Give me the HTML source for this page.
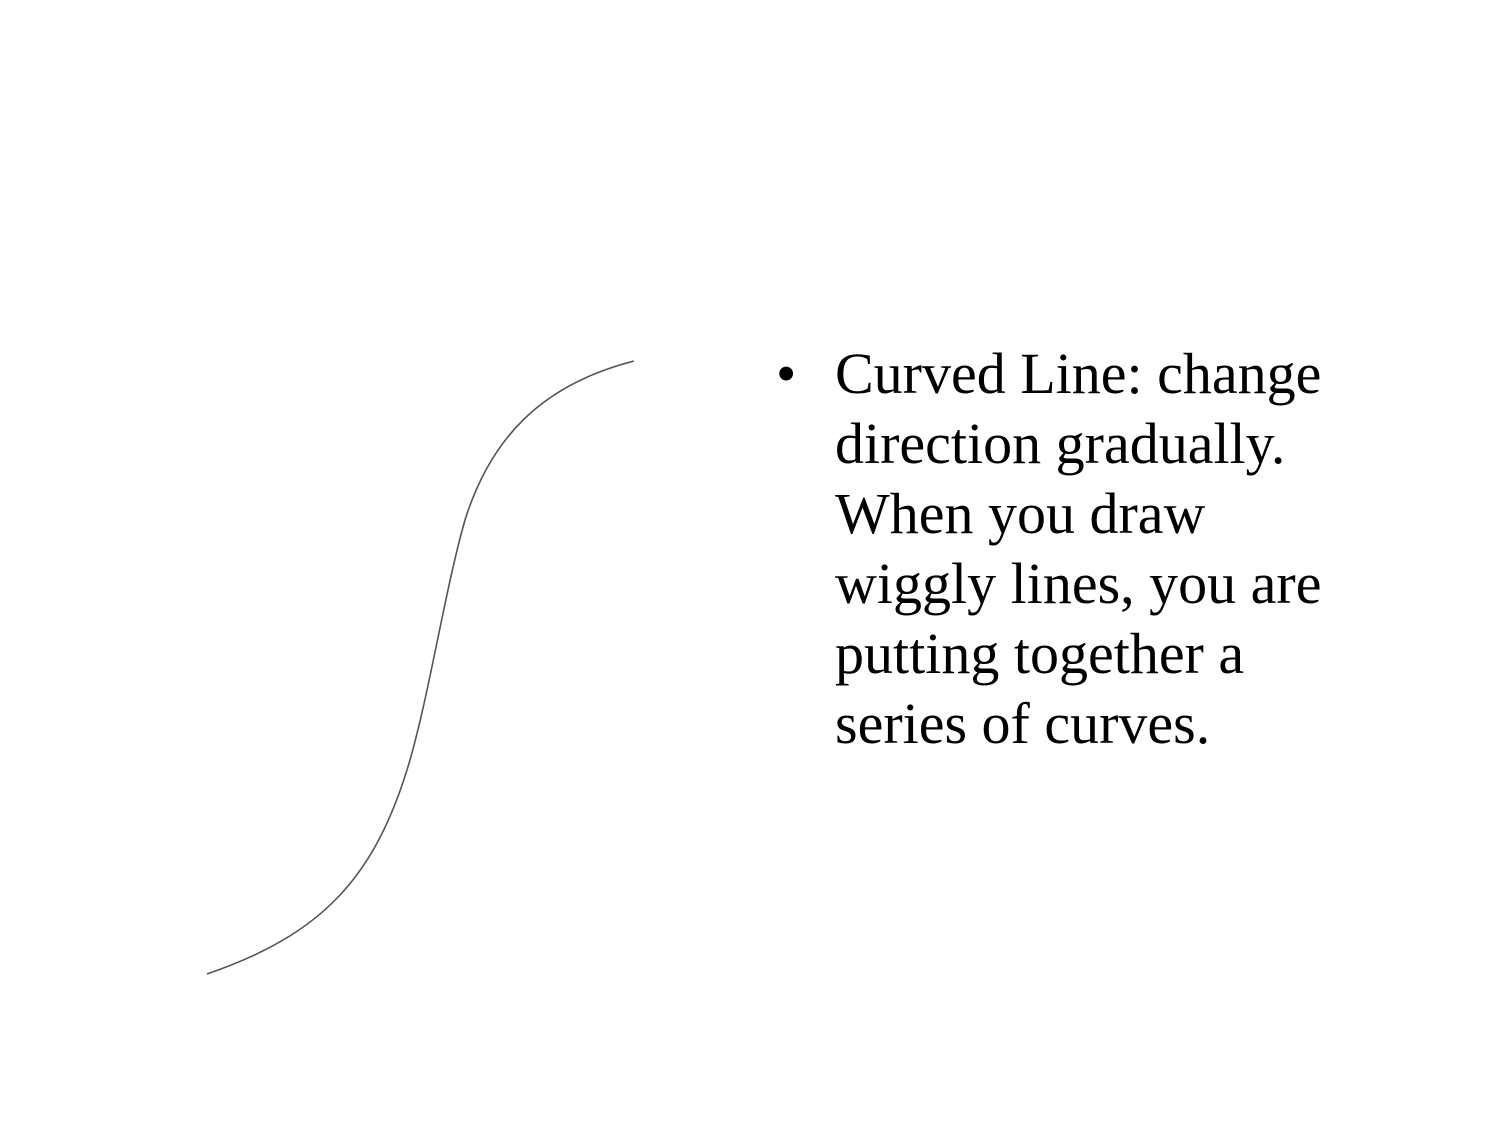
<!DOCTYPE html>
<html><head><style>
html,body{margin:0;padding:0;background:#fff;width:1500px;height:1125px;overflow:hidden;position:relative}
.t{position:absolute;left:835px;top:339px;font-family:"Liberation Serif",serif;font-size:58px;line-height:70px;color:#000;white-space:nowrap}
.b{position:absolute;left:776px;top:339px;font-family:"Liberation Serif",serif;font-size:58px;line-height:70px}
</style></head><body>
<svg width="1500" height="1125" style="position:absolute;left:0;top:0">
<path d="M634,361 C540,385 490,440 465,520 C445,590 430,690 410,760 C375,880 320,935 207,974" fill="none" stroke="#555" stroke-width="1.6"/>
</svg>
<div class="b">•</div>
<div class="t">Curved Line: change<br>direction gradually.<br>When you draw<br>wiggly lines, you are<br>putting together a<br>series of curves.</div>
</body></html>
